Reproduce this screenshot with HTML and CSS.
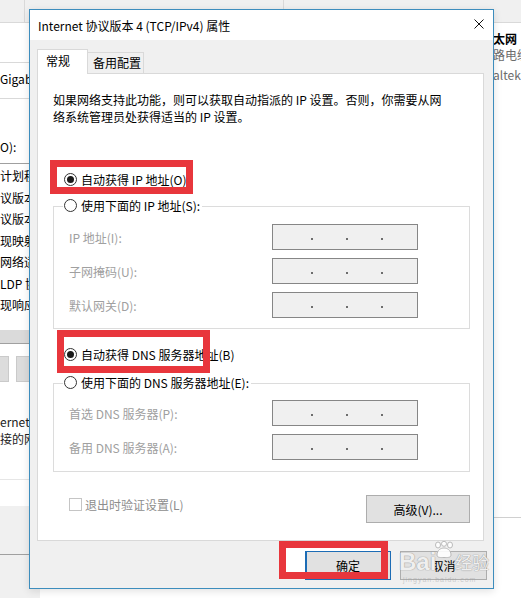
FILE: index.html
```html
<!DOCTYPE html>
<html lang="zh-CN">
<head>
    <meta charset="UTF-8">
    <meta name="viewport" content="width=device-width, initial-scale=1.0">
    <title>Internet 协议版本 4 (TCP/IPv4) 属性</title>
    <link rel="stylesheet" href="styles.css">
</head>
<body>

    <!-- Adapter properties window, mostly hidden behind the dialog -->
    <div class="backdrop">
        <div class="bg-tabbar">
            <span class="bg-tab-a"></span>
            <span class="bg-tab-b"></span>
        </div>
        <div class="bg-content">
            <div class="bg-left">
                <div class="bg-field">Gigab</div>
                <div class="bg-caption">O):</div>
                <div class="bg-list">
                    <div>计划程</div>
                    <div>议版本</div>
                    <div>议版本</div>
                    <div>现映射</div>
                    <div>网络适</div>
                    <div>LDP 协</div>
                    <div>现响应</div>
                    <div class="bg-scroll"></div>
                </div>
                <div class="bg-buttons"><span></span><span></span></div>
                <div class="bg-desc">ernet<br>接的网</div>
                <div class="bg-sep"></div>
                <div class="bg-footer"></div>
                <div class="bg-footer-rest"></div>
            </div>
            <div class="bg-mid"></div>
            <div class="bg-right">
                <div class="bg-name">太网</div>
                <div class="bg-sub">路电缆</div>
                <div class="bg-sub bg-dev">altek</div>
                <div class="bg-rule"></div>
            </div>
        </div>
    </div>

    <!-- TCP/IPv4 properties dialog -->
    <div class="dialog">
        <div class="titlebar">
            <span class="title">Internet 协议版本 4 (TCP/IPv4) 属性</span>
            <svg class="close" width="10" height="10" viewBox="0 0 10 10">
                <path d="M0.5 0.5 L9.5 9.5 M9.5 0.5 L0.5 9.5" stroke="#111" stroke-width="1" fill="none"/>
            </svg>
        </div>

        <div class="dialog-body">
            <div class="tabs">
                <div class="tab active">常规</div>
                <div class="tab">备用配置</div>
            </div>

            <div class="panel">
                <p class="intro">如果网络支持此功能，则可以获取自动指派的 IP 设置。否则，你需要从网<br>络系统管理员处获得适当的 IP 设置。</p>

                <div class="radio-row first"><span class="radio checked"></span>自动获得 IP 地址(O)</div>

                <div class="group">
                    <div class="group-head"><span class="radio"></span>使用下面的 IP 地址(S):</div>
                    <div class="field-row"><span class="field-label">IP 地址(I):</span><span class="ip-box"><i></i><i></i><i></i></span></div>
                    <div class="field-row"><span class="field-label">子网掩码(U):</span><span class="ip-box"><i></i><i></i><i></i></span></div>
                    <div class="field-row"><span class="field-label">默认网关(D):</span><span class="ip-box"><i></i><i></i><i></i></span></div>
                </div>

                <div class="radio-row second"><span class="radio checked"></span>自动获得 DNS 服务器地址(B)</div>

                <div class="group dns">
                    <div class="group-head"><span class="radio"></span>使用下面的 DNS 服务器地址(E):</div>
                    <div class="field-row"><span class="field-label">首选 DNS 服务器(P):</span><span class="ip-box"><i></i><i></i><i></i></span></div>
                    <div class="field-row"><span class="field-label">备用 DNS 服务器(A):</span><span class="ip-box"><i></i><i></i><i></i></span></div>
                </div>

                <div class="panel-bottom">
                    <div class="check-row"><span class="checkbox"></span>退出时验证设置(L)</div>
                    <div class="btn advanced">高级(V)...</div>
                </div>
            </div>

            <div class="buttons">
                <div class="btn default">确定</div>
                <div class="btn">取消</div>
            </div>
        </div>
    </div>

    <!-- Red marks drawn on the screenshot -->
    <div class="mark mark-ip"></div>
    <div class="mark mark-dns"></div>
    <div class="mark mark-ok"></div>

    <!-- Watermark -->
    <div class="watermark">
        <span class="wm-bai">Bai</span>
        <svg class="wm-paw" width="22" height="18" viewBox="0 0 22 18">
            <g fill="#fff" stroke="#b5b5b5" stroke-width="1">
                <ellipse cx="5" cy="4" rx="2.5" ry="3"/>
                <ellipse cx="11" cy="2.8" rx="2.5" ry="2.5"/>
                <ellipse cx="17" cy="4" rx="2.5" ry="3"/>
                <path d="M4 14 C4 9 8 7 11 7 C14 7 18 9 18 14 C18 17 14 16.5 11 16.5 C8 16.5 4 17 4 14 Z"/>
            </g>
        </svg>
        <span class="wm-jy">经验</span>
        <span class="wm-url">jingyan.baidu.com</span>
    </div>

</body>
</html>
```

FILE: styles.css
```css
/* General */
* {
    box-sizing: border-box;
}

body {
    margin: 0;
    width: 521px;
    height: 598px;
    overflow: hidden;
    position: relative;
    font-family: "Noto Sans CJK SC", sans-serif;
    font-size: 12px;
    color: #000;
    background-color: #fff;
}

/* Window behind */
.backdrop {
    height: 598px;
    display: flex;
    flex-direction: column;
}

.bg-tabbar {
    height: 23px;
    display: flex;
    background-color: #f0f0f0;
    border-bottom: 1px solid #d9d9d9;
}

.bg-tab-a {
    width: 25px;
    border-right: 1px solid #d9d9d9;
}

.bg-tab-b {
    width: 259px;
    border-right: 1px solid #d9d9d9;
}

.bg-content {
    flex: 1;
    display: flex;
}

.bg-left {
    width: 40px;
    display: flex;
    flex-direction: column;
}

.bg-field {
    margin-top: 39px;
    border-top: 1px solid #d9d9d9;
    border-bottom: 1px solid #d9d9d9;
    line-height: 32px;
    padding-bottom: 3px;
    white-space: nowrap;
}

.bg-caption {
    margin-top: 39px;
    line-height: 18px;
}

.bg-list {
    margin-top: 7px;
    padding-top: 1px;
    border-top: 1px solid #a0a0a0;
    border-bottom: 1px solid #a0a0a0;
    line-height: 21.5px;
    white-space: nowrap;
}

.bg-scroll {
    margin-top: 14px;
    height: 13px;
    background-color: #dadada;
}

.bg-buttons {
    margin-top: 12px;
    height: 26px;
    display: flex;
}

.bg-buttons span {
    background-color: #dcdcdc;
    border: 1px solid #cacaca;
}

.bg-buttons span:first-child {
    width: 9px;
    border-left: none;
}

.bg-buttons span:last-child {
    width: 24px;
    margin-left: 7px;
}

.bg-desc {
    margin-top: 31px;
    line-height: 17px;
    white-space: nowrap;
    color: #222;
}

.bg-sep {
    margin-top: 32px;
    border-top: 1px solid #e6e6e6;
}

.bg-footer {
    margin-top: 26px;
    height: 49px;
    background-color: #f0f0f0;
    border-bottom: 1px solid #a0a0a0;
}

.bg-footer-rest {
    flex: 1;
    background-color: #f0f0f0;
}

.bg-mid {
    flex: 1;
}

.bg-right {
    width: 28px;
    overflow: hidden;
    white-space: nowrap;
}

.bg-name {
    margin-top: 8px;
    line-height: 16px;
    font-weight: bold;
}

.bg-sub {
    line-height: 16px;
    color: #6d6d6d;
}

.bg-dev {
    margin-top: 4px;
}

.bg-rule {
    margin-top: 434px;
    border-top: 1px solid #d0d0d0;
}

/* Dialog */
.dialog {
    position: absolute;
    left: 29px;
    top: 9px;
    width: 465px;
    height: 580px;
    border: 1px solid #3d8dbd;
    background-color: #f0f0f0;
    box-shadow: 0 2px 8px rgba(0, 0, 0, 0.12);
    display: flex;
    flex-direction: column;
}

.titlebar {
    height: 30px;
    background-color: #fff;
    display: flex;
    align-items: center;
    padding-left: 8px;
}

.close {
    margin-left: auto;
    margin-right: 9px;
    align-self: flex-start;
    margin-top: 9px;
}

.dialog-body {
    padding: 9px 9px 8px 7px;
    flex: 1;
    display: flex;
    flex-direction: column;
}

/* Tabs */
.tabs {
    height: 24px;
    display: flex;
    align-items: flex-end;
}

.tab {
    height: 21px;
    width: 56px;
    padding-left: 5px;
    line-height: 20px;
    background-color: #f0f0f0;
    border: 1px solid #d9d9d9;
    border-left: none;
    border-bottom: none;
}

.tab.active {
    position: relative;
    z-index: 1;
    height: 25px;
    width: 51px;
    margin-bottom: -1px;
    padding-left: 8px;
    line-height: 22px;
    background-color: #fff;
    border-left: 1px solid #d9d9d9;
}

.panel {
    background-color: #fff;
    border: 1px solid #d9d9d9;
    padding: 17px 13px 17px 15px;
}

.intro {
    margin: 0;
    line-height: 17px;
    white-space: nowrap;
}

/* Radios */
.radio-row {
    height: 18px;
    display: flex;
    align-items: center;
    gap: 4px;
    margin-left: 11px;
    white-space: nowrap;
}

.radio-row.first {
    margin-top: 45px;
}

.radio-row.second {
    margin-top: 16px;
}

.radio {
    width: 13px;
    height: 13px;
    border: 1px solid #333;
    border-radius: 50%;
    background-color: #fff;
    display: flex;
    align-items: center;
    justify-content: center;
    flex-shrink: 0;
}

.radio.checked::after {
    content: "";
    width: 7px;
    height: 7px;
    border-radius: 50%;
    background-color: #1a1a1a;
}

/* Group boxes */
.group {
    margin-top: 18px;
    border: 1px solid #dcdcdc;
    padding-bottom: 10px;
}

.group.dns {
    margin-top: 20px;
    padding-bottom: 11px;
}

.group-head {
    width: fit-content;
    height: 18px;
    margin: -11px 0 0 9px;
    padding: 0 2px 0 1px;
    background-color: #fff;
    display: flex;
    align-items: center;
    gap: 4px;
    white-space: nowrap;
}

.field-row {
    height: 26px;
    margin-top: 8px;
    padding-left: 15px;
    display: flex;
    align-items: center;
}

.group-head + .field-row {
    margin-top: 10px;
}

.group.dns .group-head + .field-row {
    margin-top: 9px;
}

.field-label {
    width: 203px;
    color: #a0a0a0;
    white-space: nowrap;
}

.ip-box {
    width: 146px;
    height: 26px;
    background-color: #f0f0f0;
    border: 1px solid #868686;
    display: flex;
    align-items: center;
    gap: 33px;
    padding: 4px 0 0 38px;
}

.ip-box i {
    width: 2px;
    height: 2px;
    background-color: #6d6d6d;
}

/* Bottom of the panel */
.panel-bottom {
    margin-top: 23px;
    display: flex;
    align-items: flex-start;
}

.check-row {
    height: 18px;
    margin-left: 16px;
    display: flex;
    align-items: center;
    gap: 3px;
    color: #8d8d8d;
}

.checkbox {
    width: 13px;
    height: 13px;
    border: 1px solid #c5c5c5;
    background-color: #fff;
}

.btn {
    height: 29px;
    width: 87px;
    background-color: #e1e1e1;
    border: 1px solid #adadad;
    display: flex;
    align-items: center;
    justify-content: center;
}

.btn.advanced {
    margin-left: auto;
    width: 104px;
    height: 28px;
}

.buttons {
    margin-top: 10px;
    margin-right: -3px;
    display: flex;
    justify-content: flex-end;
    gap: 9px;
}

.btn.default {
    width: 86px;
    border-color: #1c6cb5;
    box-shadow: inset 1px 0 0 #1c6cb5;
}

/* Red marks */
.mark {
    position: absolute;
    border: 7px solid #e8363c;
}

.mark-ip {
    left: 50px;
    top: 160px;
    width: 143px;
    height: 34px;
}

.mark-dns {
    left: 57px;
    top: 330px;
    width: 153px;
    height: 43px;
}

.mark-ok {
    left: 279px;
    top: 541px;
    width: 109px;
    height: 38px;
    background:
        linear-gradient(90deg, #fff 19px, transparent 19px),
        linear-gradient(#fff 3px, transparent 3px);
}

/* Watermark */
.watermark {
    position: absolute;
    left: 399px;
    top: 541px;
    width: 95px;
    height: 50px;
    display: flex;
    align-items: flex-start;
}

.wm-bai {
    margin-top: 8px;
    font-family: "Liberation Sans", sans-serif;
    font-size: 24px;
    font-weight: bold;
    line-height: 26px;
    color: rgba(255, 255, 255, 0.85);
    text-shadow: 0 0 1px #9a9a9a, 0 0 1px #9a9a9a;
}

.wm-paw {
    margin-left: -3px;
    opacity: 0.9;
}

.wm-jy {
    margin-top: 10px;
    font-size: 17px;
    line-height: 22px;
    color: rgba(255, 255, 255, 0.85);
    text-shadow: 0 0 1px #9a9a9a, 0 0 1px #9a9a9a;
}

.wm-url {
    position: absolute;
    left: 4px;
    top: 35px;
    font-family: "Liberation Sans", sans-serif;
    font-size: 7px;
    letter-spacing: 1px;
    color: rgba(160, 160, 160, 0.5);
}
```
